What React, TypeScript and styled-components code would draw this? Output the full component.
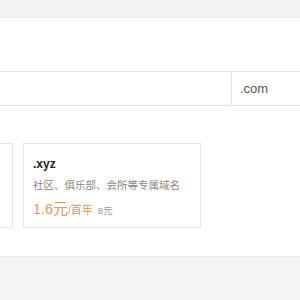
import React from "react";
import styled, { createGlobalStyle } from "styled-components";

const GlobalStyle = createGlobalStyle`
  html, body {
    margin: 0;
    padding: 0;
    background: #f4f5f7;
    font-family: "Liberation Sans", "Noto Sans CJK SC", sans-serif;
    overflow: hidden;
  }
`;

const suffixes = [
  { name: ".xyz", desc: "社区、俱乐部、会所等专属域名", price: "1.6元", unit: "/首年", old: "8元" },
];

const App = () => {
  return (
    <>
      <GlobalStyle />
      <Page>
        <TopBand />
        <Panel>
          <SearchRow>
            <SearchInput placeholder="" />
            <SuffixSelect>.com</SuffixSelect>
          </SearchRow>
          <CardRow>
            <Card />
            {suffixes.map((s) => (
              <Card key={s.name}>
                <CardTitle>{s.name}</CardTitle>
                <CardDesc>{s.desc}</CardDesc>
                <PriceLine>
                  <Price>{s.price}</Price>
                  <Unit>{s.unit}</Unit>
                  <OldPrice>{s.old}</OldPrice>
                </PriceLine>
              </Card>
            ))}
          </CardRow>
        </Panel>
      </Page>
    </>
  );
};

export default App;

const Page = styled.div`
  width: 300px;
  height: 300px;
  overflow: hidden;
  background: #f4f5f7;
`;

const TopBand = styled.div`
  height: 17px;
  background: #f2f3f5;
`;

const Panel = styled.div`
  height: 240px;
  background: #fff;
  border-top: 1px solid #e6e8eb;
  border-bottom: 1px solid #e6e8eb;
  padding-top: 53px;
  box-sizing: border-box;
`;

const SearchRow = styled.div`
  display: flex;
  height: 35px;
  margin-left: -20px;
  width: 340px;
  border: 1px solid #e4e4e4;
  box-sizing: border-box;
`;

const SearchInput = styled.input`
  flex: 0 0 251px;
  box-sizing: border-box;
  padding: 0;
  border: none;
  border-right: 1px solid #e4e4e4;
  outline: none;
  background: #fff;
`;

const SuffixSelect = styled.div`
  flex: 1;
  display: flex;
  align-items: center;
  padding-left: 8px;
  font-size: 13px;
  color: #555;
`;

const CardRow = styled.div`
  display: grid;
  grid-template-columns: 178px 178px;
  gap: 10px;
  margin-top: 37px;
  margin-left: -165px;
`;

const Card = styled.div`
  height: 85px;
  border: 1px solid #e6e6e6;
  box-sizing: border-box;
  padding: 12px 9px 0;
`;

const CardTitle = styled.div`
  font-size: 12px;
  font-weight: bold;
  color: #222;
  line-height: 16px;
`;

const CardDesc = styled.div`
  margin-top: 6px;
  font-size: 10.5px;
  color: #888;
  line-height: 14px;
  white-space: nowrap;
`;

const PriceLine = styled.div`
  margin-top: 8px;
  display: flex;
  align-items: baseline;
  line-height: 18px;
`;

const Price = styled.span`
  font-size: 14.5px;
  color: #f0915a;
`;

const Unit = styled.span`
  font-size: 11px;
  color: #f0915a;
`;

const OldPrice = styled.span`
  margin-left: 5px;
  font-size: 9.5px;
  color: #999;
`;
